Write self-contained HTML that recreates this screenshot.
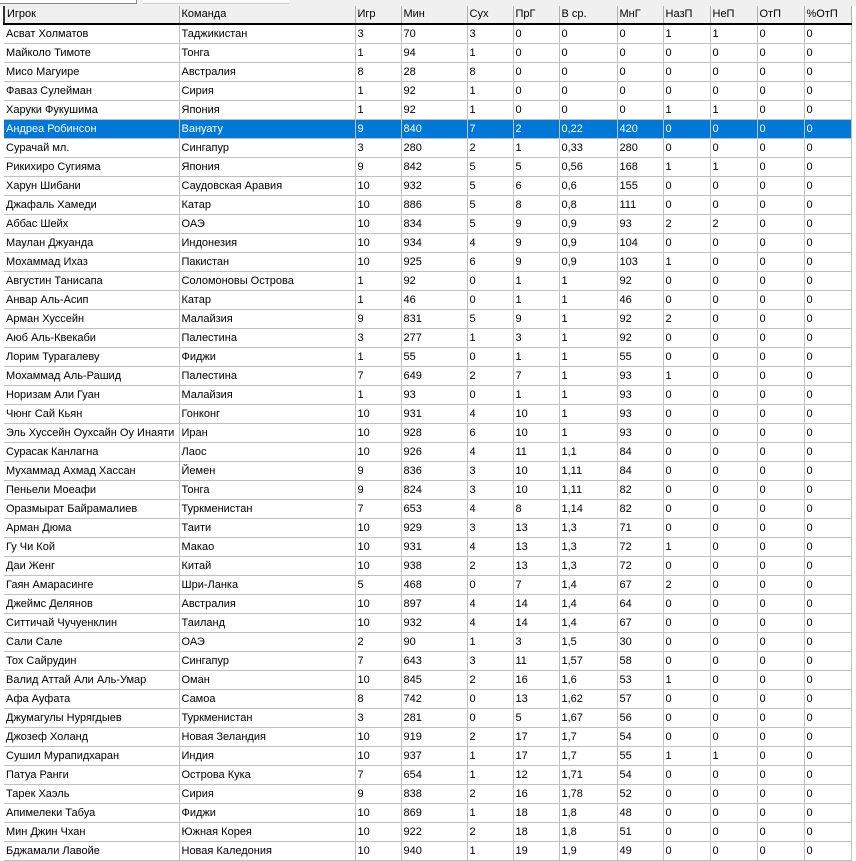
<!DOCTYPE html>
<html><head><meta charset="utf-8"><style>
html,body{margin:0;padding:0;background:#fff;width:856px;height:860px;overflow:hidden}
.top{position:absolute;left:0;top:0;width:856px;height:6px;background:#f0f0f0}
.b1{position:absolute;left:0;top:0;width:136px;height:3px;border-right:1px solid #888;border-bottom:1px solid #888;background:#fff}
.b2{position:absolute;left:143px;top:0;width:146px;height:3px;background:#fafafa;border-bottom:1px solid #ccc}
table{position:absolute;left:3px;top:6px;border-collapse:collapse;table-layout:fixed;font-family:"Liberation Sans",Tahoma,sans-serif;font-size:11px;color:#000}
td,th{border-right:1px solid #c0c0c0;border-bottom:1px solid #c0c0c0;height:18px;padding:0 0 0 2px;white-space:nowrap;overflow:hidden;text-align:left;font-weight:normal;line-height:18px}
th{background:#f0f0f0;border-bottom:2px solid #000;height:17px;line-height:17px;border-right:1px solid #b0b0b0}
th:first-child{border-left:2px solid #333}
tr.s td{background:#0078d7;color:#fff}
</style></head><body>
<div class="top"><div class="b1"></div><div class="b2"></div></div>
<table>
<colgroup><col style="width:175px"><col style="width:176px"><col style="width:46px"><col style="width:66px"><col style="width:46px"><col style="width:46px"><col style="width:58px"><col style="width:46px"><col style="width:47px"><col style="width:47px"><col style="width:47px"><col style="width:47px"></colgroup>
<tr><th>Игрок</th><th>Команда</th><th>Игр</th><th>Мин</th><th>Сух</th><th>ПрГ</th><th>В ср.</th><th>МнГ</th><th>НазП</th><th>НеП</th><th>ОтП</th><th>%ОтП</th></tr>
<tr><td>Асват Холматов</td><td>Таджикистан</td><td>3</td><td>70</td><td>3</td><td>0</td><td>0</td><td>0</td><td>1</td><td>1</td><td>0</td><td>0</td></tr>
<tr><td>Майколо Тимоте</td><td>Тонга</td><td>1</td><td>94</td><td>1</td><td>0</td><td>0</td><td>0</td><td>0</td><td>0</td><td>0</td><td>0</td></tr>
<tr><td>Мисо Магуире</td><td>Австралия</td><td>8</td><td>28</td><td>8</td><td>0</td><td>0</td><td>0</td><td>0</td><td>0</td><td>0</td><td>0</td></tr>
<tr><td>Фаваз Сулейман</td><td>Сирия</td><td>1</td><td>92</td><td>1</td><td>0</td><td>0</td><td>0</td><td>0</td><td>0</td><td>0</td><td>0</td></tr>
<tr><td>Харуки Фукушима</td><td>Япония</td><td>1</td><td>92</td><td>1</td><td>0</td><td>0</td><td>0</td><td>1</td><td>1</td><td>0</td><td>0</td></tr>
<tr class="s"><td>Андреа Робинсон</td><td>Вануату</td><td>9</td><td>840</td><td>7</td><td>2</td><td>0,22</td><td>420</td><td>0</td><td>0</td><td>0</td><td>0</td></tr>
<tr><td>Сурачай мл.</td><td>Сингапур</td><td>3</td><td>280</td><td>2</td><td>1</td><td>0,33</td><td>280</td><td>0</td><td>0</td><td>0</td><td>0</td></tr>
<tr><td>Рикихиро Сугияма</td><td>Япония</td><td>9</td><td>842</td><td>5</td><td>5</td><td>0,56</td><td>168</td><td>1</td><td>1</td><td>0</td><td>0</td></tr>
<tr><td>Харун Шибани</td><td>Саудовская Аравия</td><td>10</td><td>932</td><td>5</td><td>6</td><td>0,6</td><td>155</td><td>0</td><td>0</td><td>0</td><td>0</td></tr>
<tr><td>Джафаль Хамеди</td><td>Катар</td><td>10</td><td>886</td><td>5</td><td>8</td><td>0,8</td><td>111</td><td>0</td><td>0</td><td>0</td><td>0</td></tr>
<tr><td>Аббас Шейх</td><td>ОАЭ</td><td>10</td><td>834</td><td>5</td><td>9</td><td>0,9</td><td>93</td><td>2</td><td>2</td><td>0</td><td>0</td></tr>
<tr><td>Маулан Джуанда</td><td>Индонезия</td><td>10</td><td>934</td><td>4</td><td>9</td><td>0,9</td><td>104</td><td>0</td><td>0</td><td>0</td><td>0</td></tr>
<tr><td>Мохаммад Ихаз</td><td>Пакистан</td><td>10</td><td>925</td><td>6</td><td>9</td><td>0,9</td><td>103</td><td>1</td><td>0</td><td>0</td><td>0</td></tr>
<tr><td>Августин Танисапа</td><td>Соломоновы Острова</td><td>1</td><td>92</td><td>0</td><td>1</td><td>1</td><td>92</td><td>0</td><td>0</td><td>0</td><td>0</td></tr>
<tr><td>Анвар Аль-Асип</td><td>Катар</td><td>1</td><td>46</td><td>0</td><td>1</td><td>1</td><td>46</td><td>0</td><td>0</td><td>0</td><td>0</td></tr>
<tr><td>Арман Хуссейн</td><td>Малайзия</td><td>9</td><td>831</td><td>5</td><td>9</td><td>1</td><td>92</td><td>2</td><td>0</td><td>0</td><td>0</td></tr>
<tr><td>Аюб Аль-Квекаби</td><td>Палестина</td><td>3</td><td>277</td><td>1</td><td>3</td><td>1</td><td>92</td><td>0</td><td>0</td><td>0</td><td>0</td></tr>
<tr><td>Лорим Турагалеву</td><td>Фиджи</td><td>1</td><td>55</td><td>0</td><td>1</td><td>1</td><td>55</td><td>0</td><td>0</td><td>0</td><td>0</td></tr>
<tr><td>Мохаммад Аль-Рашид</td><td>Палестина</td><td>7</td><td>649</td><td>2</td><td>7</td><td>1</td><td>93</td><td>1</td><td>0</td><td>0</td><td>0</td></tr>
<tr><td>Норизам Али Гуан</td><td>Малайзия</td><td>1</td><td>93</td><td>0</td><td>1</td><td>1</td><td>93</td><td>0</td><td>0</td><td>0</td><td>0</td></tr>
<tr><td>Чюнг Сай Кьян</td><td>Гонконг</td><td>10</td><td>931</td><td>4</td><td>10</td><td>1</td><td>93</td><td>0</td><td>0</td><td>0</td><td>0</td></tr>
<tr><td>Эль Хуссейн Оухсайн Оу Инаяти</td><td>Иран</td><td>10</td><td>928</td><td>6</td><td>10</td><td>1</td><td>93</td><td>0</td><td>0</td><td>0</td><td>0</td></tr>
<tr><td>Сурасак Канлагна</td><td>Лаос</td><td>10</td><td>926</td><td>4</td><td>11</td><td>1,1</td><td>84</td><td>0</td><td>0</td><td>0</td><td>0</td></tr>
<tr><td>Мухаммад Ахмад Хассан</td><td>Йемен</td><td>9</td><td>836</td><td>3</td><td>10</td><td>1,11</td><td>84</td><td>0</td><td>0</td><td>0</td><td>0</td></tr>
<tr><td>Пеньели Моеафи</td><td>Тонга</td><td>9</td><td>824</td><td>3</td><td>10</td><td>1,11</td><td>82</td><td>0</td><td>0</td><td>0</td><td>0</td></tr>
<tr><td>Оразмырат Байрамалиев</td><td>Туркменистан</td><td>7</td><td>653</td><td>4</td><td>8</td><td>1,14</td><td>82</td><td>0</td><td>0</td><td>0</td><td>0</td></tr>
<tr><td>Арман Дюма</td><td>Таити</td><td>10</td><td>929</td><td>3</td><td>13</td><td>1,3</td><td>71</td><td>0</td><td>0</td><td>0</td><td>0</td></tr>
<tr><td>Гу Чи Кой</td><td>Макао</td><td>10</td><td>931</td><td>4</td><td>13</td><td>1,3</td><td>72</td><td>1</td><td>0</td><td>0</td><td>0</td></tr>
<tr><td>Даи Женг</td><td>Китай</td><td>10</td><td>938</td><td>2</td><td>13</td><td>1,3</td><td>72</td><td>0</td><td>0</td><td>0</td><td>0</td></tr>
<tr><td>Гаян Амарасинге</td><td>Шри-Ланка</td><td>5</td><td>468</td><td>0</td><td>7</td><td>1,4</td><td>67</td><td>2</td><td>0</td><td>0</td><td>0</td></tr>
<tr><td>Джеймс Делянов</td><td>Австралия</td><td>10</td><td>897</td><td>4</td><td>14</td><td>1,4</td><td>64</td><td>0</td><td>0</td><td>0</td><td>0</td></tr>
<tr><td>Ситтичай Чучуенклин</td><td>Таиланд</td><td>10</td><td>932</td><td>4</td><td>14</td><td>1,4</td><td>67</td><td>0</td><td>0</td><td>0</td><td>0</td></tr>
<tr><td>Сали Сале</td><td>ОАЭ</td><td>2</td><td>90</td><td>1</td><td>3</td><td>1,5</td><td>30</td><td>0</td><td>0</td><td>0</td><td>0</td></tr>
<tr><td>Тох Сайрудин</td><td>Сингапур</td><td>7</td><td>643</td><td>3</td><td>11</td><td>1,57</td><td>58</td><td>0</td><td>0</td><td>0</td><td>0</td></tr>
<tr><td>Валид Аттай Али Аль-Умар</td><td>Оман</td><td>10</td><td>845</td><td>2</td><td>16</td><td>1,6</td><td>53</td><td>1</td><td>0</td><td>0</td><td>0</td></tr>
<tr><td>Афа Ауфата</td><td>Самоа</td><td>8</td><td>742</td><td>0</td><td>13</td><td>1,62</td><td>57</td><td>0</td><td>0</td><td>0</td><td>0</td></tr>
<tr><td>Джумагулы Нурягдыев</td><td>Туркменистан</td><td>3</td><td>281</td><td>0</td><td>5</td><td>1,67</td><td>56</td><td>0</td><td>0</td><td>0</td><td>0</td></tr>
<tr><td>Джозеф Холанд</td><td>Новая Зеландия</td><td>10</td><td>919</td><td>2</td><td>17</td><td>1,7</td><td>54</td><td>0</td><td>0</td><td>0</td><td>0</td></tr>
<tr><td>Сушил Мурапидхаран</td><td>Индия</td><td>10</td><td>937</td><td>1</td><td>17</td><td>1,7</td><td>55</td><td>1</td><td>1</td><td>0</td><td>0</td></tr>
<tr><td>Патуа Ранги</td><td>Острова Кука</td><td>7</td><td>654</td><td>1</td><td>12</td><td>1,71</td><td>54</td><td>0</td><td>0</td><td>0</td><td>0</td></tr>
<tr><td>Тарек Хаэль</td><td>Сирия</td><td>9</td><td>838</td><td>2</td><td>16</td><td>1,78</td><td>52</td><td>0</td><td>0</td><td>0</td><td>0</td></tr>
<tr><td>Апимелеки Табуа</td><td>Фиджи</td><td>10</td><td>869</td><td>1</td><td>18</td><td>1,8</td><td>48</td><td>0</td><td>0</td><td>0</td><td>0</td></tr>
<tr><td>Мин Джин Чхан</td><td>Южная Корея</td><td>10</td><td>922</td><td>2</td><td>18</td><td>1,8</td><td>51</td><td>0</td><td>0</td><td>0</td><td>0</td></tr>
<tr><td>Бджамали Лавойе</td><td>Новая Каледония</td><td>10</td><td>940</td><td>1</td><td>19</td><td>1,9</td><td>49</td><td>0</td><td>0</td><td>0</td><td>0</td></tr>
</table>
</body></html>
